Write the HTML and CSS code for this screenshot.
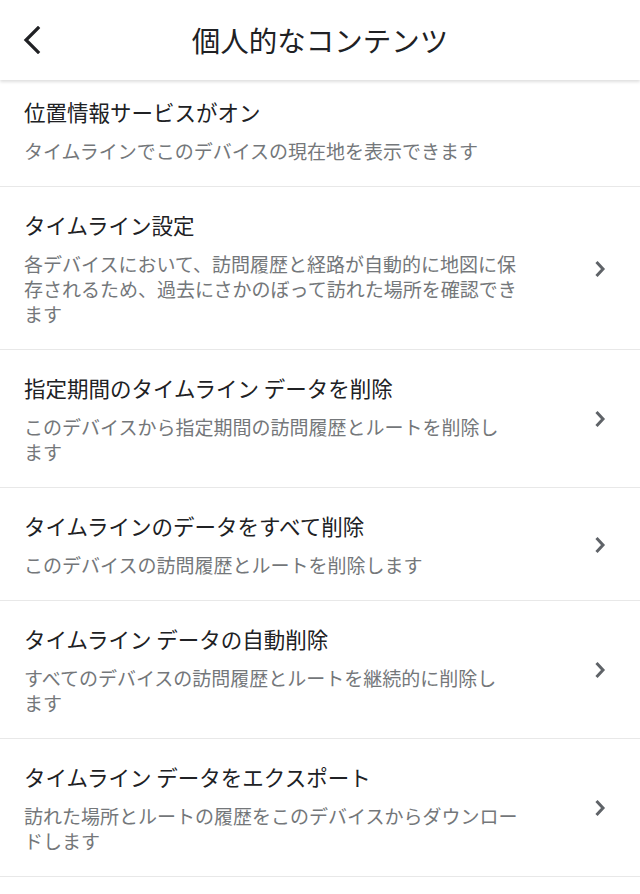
FILE: index.html
```html
<!DOCTYPE html>
<html lang="ja">
<head>
<meta charset="utf-8">
<title>個人的なコンテンツ</title>
<link rel="stylesheet" href="styles.css">
</head>
<body>
<header class="appbar">
  <button class="back" aria-label="戻る">
    <svg width="20" height="28" viewBox="0 0 20 28"><path d="M16 2 L4 14 L16 26" fill="none" stroke="#202124" stroke-width="3.2" stroke-linecap="square" stroke-linejoin="miter"/></svg>
  </button>
  <h1 class="appbar-title">個人的なコンテンツ</h1>
  <span class="spacer"></span>
</header>
<ul class="list">
  <li class="item first">
    <div class="text">
      <div class="title">位置情報サービスがオン</div>
      <div class="sub">タイムラインでこのデバイスの現在地を表示できます</div>
    </div>
  </li>
  <li class="item">
    <div class="text">
      <div class="title">タイムライン設定</div>
      <div class="sub">各デバイスにおいて、訪問履歴と経路が自動的に地図に保存されるため、過去にさかのぼって訪れた場所を確認できます</div>
    </div>
    <svg class="chev" width="12" height="18" viewBox="0 0 12 18"><path d="M2.5 2 L9 9 L2.5 16" fill="none" stroke="#5f6368" stroke-width="3"/></svg>
  </li>
  <li class="item">
    <div class="text">
      <div class="title">指定期間のタイムライン データを削除</div>
      <div class="sub">このデバイスから指定期間の訪問履歴とルートを削除し<span class="nw">ます</span></div>
    </div>
    <svg class="chev" width="12" height="18" viewBox="0 0 12 18"><path d="M2.5 2 L9 9 L2.5 16" fill="none" stroke="#5f6368" stroke-width="3"/></svg>
  </li>
  <li class="item">
    <div class="text">
      <div class="title">タイムラインのデータをすべて削除</div>
      <div class="sub">このデバイスの訪問履歴とルートを削除します</div>
    </div>
    <svg class="chev" width="12" height="18" viewBox="0 0 12 18"><path d="M2.5 2 L9 9 L2.5 16" fill="none" stroke="#5f6368" stroke-width="3"/></svg>
  </li>
  <li class="item">
    <div class="text">
      <div class="title">タイムライン データの自動削除</div>
      <div class="sub">すべてのデバイスの訪問履歴とルートを継続的に削除し<span class="nw">ます</span></div>
    </div>
    <svg class="chev" width="12" height="18" viewBox="0 0 12 18"><path d="M2.5 2 L9 9 L2.5 16" fill="none" stroke="#5f6368" stroke-width="3"/></svg>
  </li>
  <li class="item">
    <div class="text">
      <div class="title">タイムライン データをエクスポート</div>
      <div class="sub">訪れた場所とルートの履歴をこのデバイスからダウンロードします</div>
    </div>
    <svg class="chev" width="12" height="18" viewBox="0 0 12 18"><path d="M2.5 2 L9 9 L2.5 16" fill="none" stroke="#5f6368" stroke-width="3"/></svg>
  </li>
</ul>
</body>
</html>
```
FILE: styles.css
```css
* { box-sizing: border-box; }
html, body {
  margin: 0;
  padding: 0;
  background: #ffffff;
}
body {
  font-family: "Noto Sans CJK JP", "Noto Sans", sans-serif;
  color: #202124;
  width: 640px;
}
.appbar {
  height: 80px;
  display: grid;
  grid-template-columns: 64px 1fr 64px;
  align-items: center;
  background: #fff;
  box-shadow: 0 2px 3px rgba(0, 0, 0, 0.13);
  position: relative;
  z-index: 1;
}
.back {
  border: 0;
  background: none;
  padding: 0 0 0 22px;
  margin: 0;
  height: 80px;
  display: flex;
  align-items: center;
  justify-content: flex-start;
}
.back svg { display: block; }
.appbar-title {
  margin: 0;
  text-align: center;
  font-size: 28.5px;
  font-weight: 400;
  line-height: 36px;
  color: #202124;
}
.list {
  list-style: none;
  margin: 0;
  padding: 0;
}
.item {
  display: flex;
  align-items: center;
  padding: 24px 34px 23px 24px;
  border-bottom: 1px solid #e8e8e8;
}
.item.first { padding-top: 18px; }
.text {
  width: 500px;
}
.title {
  font-size: 21.5px;
  line-height: 28px;
  color: #202124;
  margin-bottom: 12px;
}
.sub {
  font-size: 19px;
  line-height: 25px;
  color: #74777a;
}
.nw { white-space: nowrap; }
.chev {
  margin-left: auto;
  display: block;
  flex: none;
}
```
